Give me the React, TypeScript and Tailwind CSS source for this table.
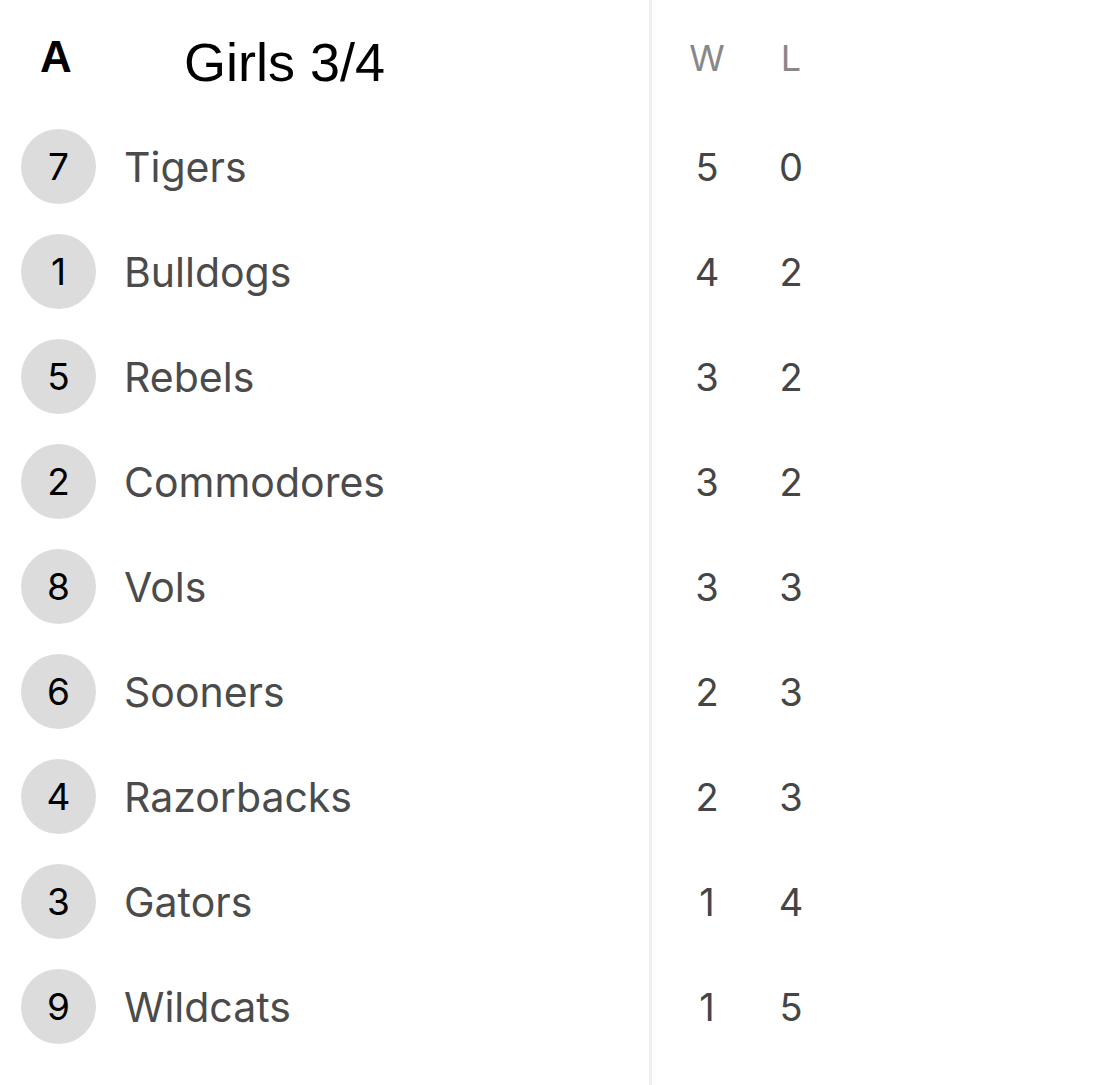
const teams = [
  {seed: 7, name: 'Tigers', w: 5, l: 0},
  {seed: 1, name: 'Bulldogs', w: 4, l: 2},
  {seed: 5, name: 'Rebels', w: 3, l: 2},
  {seed: 2, name: 'Commodores', w: 3, l: 2},
  {seed: 8, name: 'Vols', w: 3, l: 3},
  {seed: 6, name: 'Sooners', w: 2, l: 3},
  {seed: 4, name: 'Razorbacks', w: 2, l: 3},
  {seed: 3, name: 'Gators', w: 1, l: 4},
  {seed: 9, name: 'Wildcats', w: 1, l: 5},
]

export default function App() {
  return (
    <div className="flex min-h-screen w-[1101px] bg-white font-['Inter',sans-serif]">
      {/* левая колонка: посев и команды */}
      <div className="w-[649px] shrink-0">
        <div className="flex h-[114px] items-start pt-[35px] font-['Liberation_Sans',Arial,sans-serif] leading-none text-black">
          <div className="w-[184px] pl-[40px] text-[44px] font-bold">A</div>
          <div className="text-[54px]">Girls 3/4</div>
        </div>
        {teams.map((t) => (
          <div key={t.name} className="flex h-[105px] items-center pl-[21px]">
            <div className="flex h-[75px] w-[75px] items-center justify-center rounded-full bg-[#dcdcdc] text-[37px] leading-none text-black">
              {t.seed}
            </div>
            <div className="ml-[28px] pt-[2px] text-[41px] leading-none text-[#4b4b4b]">{t.name}</div>
          </div>
        ))}
      </div>

      {/* правая колонка: победы / поражения */}
      <div className="flex-1 border-l-[3px] border-[#eeeeee] pl-[13px]">
        <div className="flex h-[114px] items-start pt-[40px] text-[36px] leading-none text-[#888888]">
          <div className="w-[84px] text-center">W</div>
          <div className="w-[84px] text-center">L</div>
        </div>
        {teams.map((t) => (
          <div key={t.name} className="flex h-[105px] items-center text-[38px] leading-none text-[#454545]">
            <div className="w-[84px] text-center">{t.w}</div>
            <div className="w-[84px] text-center">{t.l}</div>
          </div>
        ))}
      </div>
    </div>
  )
}
